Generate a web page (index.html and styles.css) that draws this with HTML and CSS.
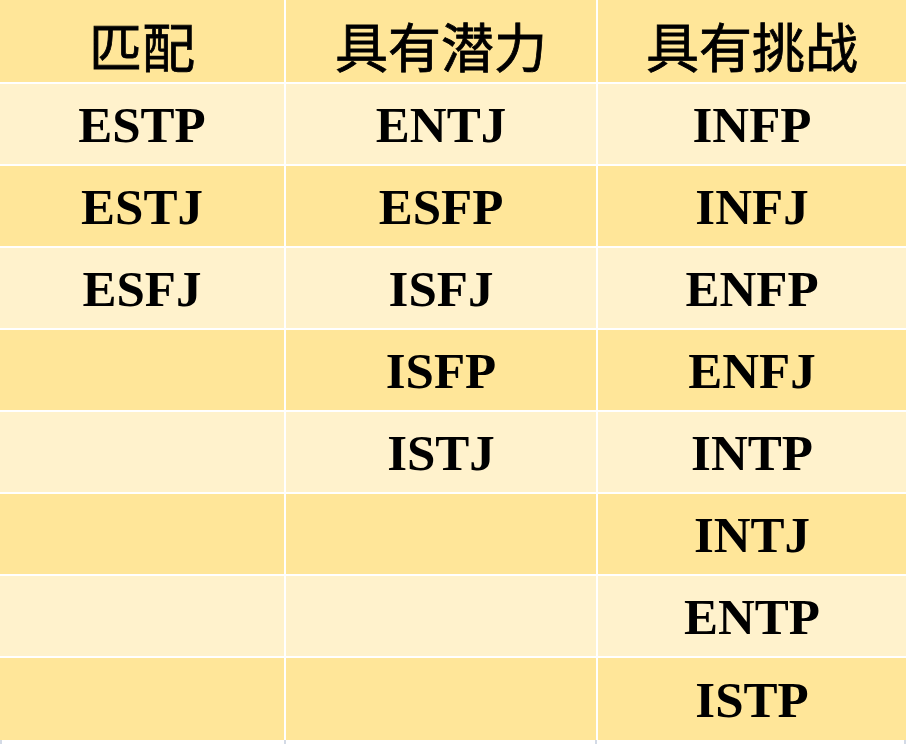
FILE: index.html
```html
<!DOCTYPE html>
<html lang="zh">
<head>
<meta charset="utf-8">
<title>MBTI</title>
<link rel="stylesheet" href="styles.css">
</head>
<body>
<div class="table">
  <div class="cell head dark">匹配</div>
  <div class="cell head dark">具有潜力</div>
  <div class="cell head dark">具有挑战</div>

  <div class="cell light">ESTP</div>
  <div class="cell light">ENTJ</div>
  <div class="cell light">INFP</div>

  <div class="cell dark">ESTJ</div>
  <div class="cell dark">ESFP</div>
  <div class="cell dark">INFJ</div>

  <div class="cell light">ESFJ</div>
  <div class="cell light">ISFJ</div>
  <div class="cell light">ENFP</div>

  <div class="cell dark"></div>
  <div class="cell dark">ISFP</div>
  <div class="cell dark">ENFJ</div>

  <div class="cell light"></div>
  <div class="cell light">ISTJ</div>
  <div class="cell light">INTP</div>

  <div class="cell dark"></div>
  <div class="cell dark"></div>
  <div class="cell dark">INTJ</div>

  <div class="cell light"></div>
  <div class="cell light"></div>
  <div class="cell light">ENTP</div>

  <div class="cell dark"></div>
  <div class="cell dark"></div>
  <div class="cell dark">ISTP</div>
</div>
<div class="ticks">
  <span class="tick"></span>
  <span></span>
  <span class="tick"></span>
  <span></span>
  <span class="tick"></span>
  <span></span>
  <span class="tick"></span>
</div>
</body>
</html>
```

FILE: styles.css
```css
html, body {
  margin: 0;
  padding: 0;
  background: #ffffff;
}

.table {
  display: grid;
  grid-template-columns: 284px 310px 308px;
  grid-template-rows: 82px repeat(7, 80px) 82px;
  gap: 2px;
  width: 906px;
}

.cell {
  display: flex;
  align-items: center;
  justify-content: center;
  font-family: "Liberation Serif", "Noto Sans CJK SC", serif;
  font-weight: bold;
  font-size: 51px;
  color: #000000;
  line-height: 1;
  padding-top: 2px;
}

.head {
  font-family: "Noto Sans CJK SC", "Liberation Serif", sans-serif;
  font-weight: 400;
  font-size: 53px;
  padding-top: 8px;
  -webkit-text-stroke: 0.8px #000000;
}

.dark {
  background: #ffe699;
}

.light {
  background: #fff2cc;
}

.ticks {
  display: grid;
  grid-template-columns: 1px 283px 2px 309px 2px 307px 2px;
  height: 4px;
}

.tick {
  display: block;
  width: 2px;
  height: 4px;
  background: #d3dae6;
}
```
